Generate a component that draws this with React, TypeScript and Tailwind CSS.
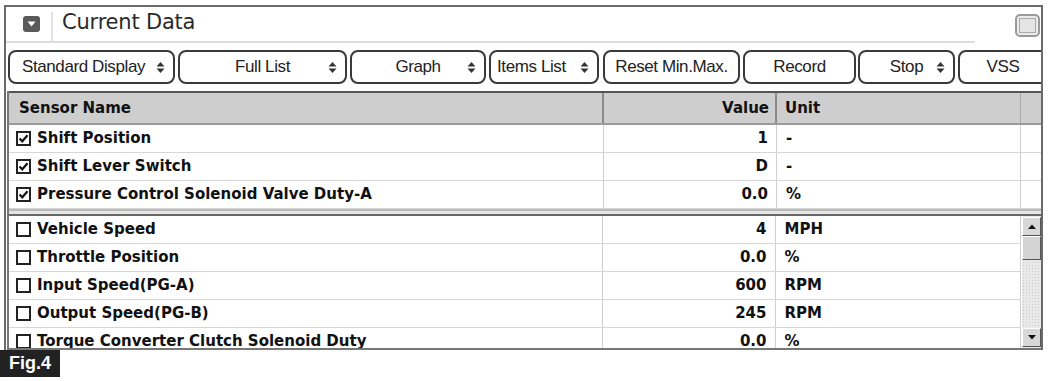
import React from "react";

type Btn = { label: string; w: string; ml: string; sel?: boolean; align?: string };

const BUTTONS: Btn[] = [
  { label: "Standard Display", w: "w-[167px]", ml: "ml-[2px]", sel: true, align: "pl-[12px]" },
  { label: "Full List", w: "w-[169px]", ml: "ml-[3px]", sel: true },
  { label: "Graph", w: "w-[136px]", ml: "ml-[3px]", sel: true },
  { label: "Items List", w: "w-[110px]", ml: "ml-[3px]", sel: true, align: "pl-[6px]" },
  { label: "Reset Min.Max.", w: "w-[137px]", ml: "ml-[4px]" },
  { label: "Record", w: "w-[113px]", ml: "ml-[3px]" },
  { label: "Stop", w: "w-[97px]", ml: "ml-[2px]", sel: true },
  { label: "VSS", w: "w-[90px]", ml: "ml-[3px]" },
];

const TOP_ROWS = [
  { name: "Shift Position", value: "1", unit: "-" },
  { name: "Shift Lever Switch", value: "D", unit: "-" },
  { name: "Pressure Control Solenoid Valve Duty-A", value: "0.0", unit: "%" },
];

const BOTTOM_ROWS = [
  { name: "Vehicle Speed", value: "4", unit: "MPH" },
  { name: "Throttle Position", value: "0.0", unit: "%" },
  { name: "Input Speed(PG-A)", value: "600", unit: "RPM" },
  { name: "Output Speed(PG-B)", value: "245", unit: "RPM" },
  { name: "Torque Converter Clutch Solenoid Duty", value: "0.0", unit: "%" },
];

function UpDown() {
  return (
    <svg width="9" height="13" viewBox="0 0 9 13" className="shrink-0">
      <path d="M0.5 5.5 L4.5 1 L8.5 5.5 Z" fill="#333" />
      <path d="M0.5 7.5 L8.5 7.5 L4.5 12 Z" fill="#333" />
    </svg>
  );
}

function CheckBox({ checked }: { checked: boolean }) {
  return (
    <span className="w-[15px] h-[15px] border-2 border-[#222] bg-white flex items-center justify-center shrink-0">
      {checked && (
        <svg width="11" height="11" viewBox="0 0 11 11">
          <path d="M1.5 5.5 L4.3 8.3 L9.5 2.3" stroke="#111" strokeWidth="2.2" fill="none" />
        </svg>
      )}
    </span>
  );
}

function Row({ r, checked, last }: { r: { name: string; value: string; unit: string }; checked: boolean; last?: boolean }) {
  return (
    <div className="flex h-[28px] border-b border-[#d6d6d6] shrink-0">
      <div className="w-[595px] flex items-center gap-[6px] pl-[7px] border-r border-[#cfcfcf]">
        <CheckBox checked={checked} />
        <span>{r.name}</span>
      </div>
      <div className="w-[173px] flex items-center justify-end pr-[8px] border-r border-[#cfcfcf]">{r.value}</div>
      <div className={`${last ? "w-[246px]" : "w-[244px]"} flex items-center pl-[9px] border-r border-[#cfcfcf]`}>
        {r.unit}
      </div>
      {!last && <div className="flex-1" />}
    </div>
  );
}

export default function App() {
  return (
    <div className="w-[1050px] h-[381px] bg-white overflow-hidden relative text-[#111]">
      <div className="ml-[4px] mt-[5px] w-[1039px] h-[345px] border-x-2 border-t-2 border-[#6a6a6a] flex flex-col overflow-hidden">
        {/* title bar */}
        <div className="flex h-[36px] shrink-0">
          <div className="w-[969px] flex items-stretch border-b-2 border-[#dcdcdc]">
            <div className="w-[47px] flex items-center justify-center border-r-2 border-[#e2e2e2] mt-[5px]">
              <div className="w-[17px] h-[16px] rounded-[3px] bg-[#5a5a5a] flex items-center justify-center -mt-[5px] ml-[6px]">
                <svg width="9" height="6" viewBox="0 0 9 6">
                  <path d="M0.5 0.5 L8.5 0.5 L4.5 5.5 Z" fill="#fff" />
                </svg>
              </div>
            </div>
            <div className="flex items-center pl-[9px] pb-[2px] font-['DejaVu_Sans',sans-serif] text-[21px] tracking-[-0.2px] text-[#2a2a2a]">
              Current Data
            </div>
          </div>
          <div className="flex-1 flex justify-end items-start pt-[7px] pr-[1px]">
            <div className="w-[25px] h-[23px] rounded-[5px] border-2 border-[#9a9a9a] bg-[#ececec] flex items-center justify-center">
              <div className="w-[17px] h-[15px] border border-[#aaa] bg-[#e4e4e4]" />
            </div>
          </div>
        </div>

        {/* button strip */}
        <div className="flex mt-[7px] h-[34px] shrink-0 font-['Liberation_Sans',sans-serif] text-[17px] tracking-[-0.4px] text-[#222]">
          {BUTTONS.map((b) => (
            <div
              key={b.label}
              className={`${b.w} ${b.ml} shrink-0 h-full rounded-[8px] border-2 border-[#3a3a3a] bg-white flex items-center ${
                b.sel ? "justify-between pr-[8px]" : "justify-center"
              } ${b.align ?? (b.sel ? "pl-[8px]" : "")}`}
            >
              {b.sel && !b.align && <span className="w-[9px]" />}
              <span>{b.label}</span>
              {b.sel && <UpDown />}
            </div>
          ))}
        </div>

        {/* table */}
        <div className="ml-[1px] mt-[7px] flex-1 flex flex-col border-l-2 border-[#777] font-['DejaVu_Sans',sans-serif] text-[15px] font-bold overflow-hidden">
          <div className="flex h-[34px] shrink-0 bg-[#cecece] border-t-2 border-[#555] border-b-2 border-b-[#9a9a9a]">
            <div className="w-[595px] flex items-center pl-[10px] border-r-2 border-[#8a8a8a]">Sensor Name</div>
            <div className="w-[173px] flex items-center justify-end pr-[6px] border-r-2 border-[#8a8a8a]">Value</div>
            <div className="w-[244px] flex items-center pl-[8px] border-r border-[#aaa]">Unit</div>
            <div className="flex-1" />
          </div>

          <div className="flex flex-col shrink-0">
            {TOP_ROWS.map((r) => (
              <Row key={r.name} r={r} checked />
            ))}
          </div>

          <div className="h-[7px] shrink-0 bg-[#e6e6e6] border-t-2 border-[#bbb] border-b-2 border-b-[#666]" />

          <div className="flex flex-1 overflow-hidden border-b-2 border-[#777]">
            <div className="flex flex-col overflow-hidden">
              {BOTTOM_ROWS.map((r) => (
                <Row key={r.name} r={r} checked={false} last />
              ))}
            </div>
            <div className="w-[19px] ml-[1px] flex flex-col bg-[#e9e9e9] bg-[radial-gradient(#c8c8c8_0.6px,transparent_0.7px)] bg-[size:3px_3px]">
              <div className="h-[19px] mt-[1px] bg-[#d8d8d8] border border-t-white border-l-white border-r-[#555] border-b-[#555] flex items-center justify-center">
                <svg width="8" height="5" viewBox="0 0 8 5">
                  <path d="M0 5 L4 0.5 L8 5 Z" fill="#111" />
                </svg>
              </div>
              <div className="h-[24px] bg-[#d4d4d4] border border-t-white border-l-white border-r-[#555] border-b-[#555]" />
              <div className="flex-1" />
              <div className="h-[19px] mb-[1px] bg-[#d8d8d8] border border-t-white border-l-white border-r-[#555] border-b-[#555] flex items-center justify-center">
                <svg width="8" height="5" viewBox="0 0 8 5">
                  <path d="M0 0 L8 0 L4 4.5 Z" fill="#111" />
                </svg>
              </div>
            </div>
          </div>
        </div>
      </div>

      <div className="w-[60px] h-[27px] bg-[#222] flex items-center justify-center text-white font-bold font-['Liberation_Sans',sans-serif] text-[18px]">
        Fig.4
      </div>
    </div>
  );
}
